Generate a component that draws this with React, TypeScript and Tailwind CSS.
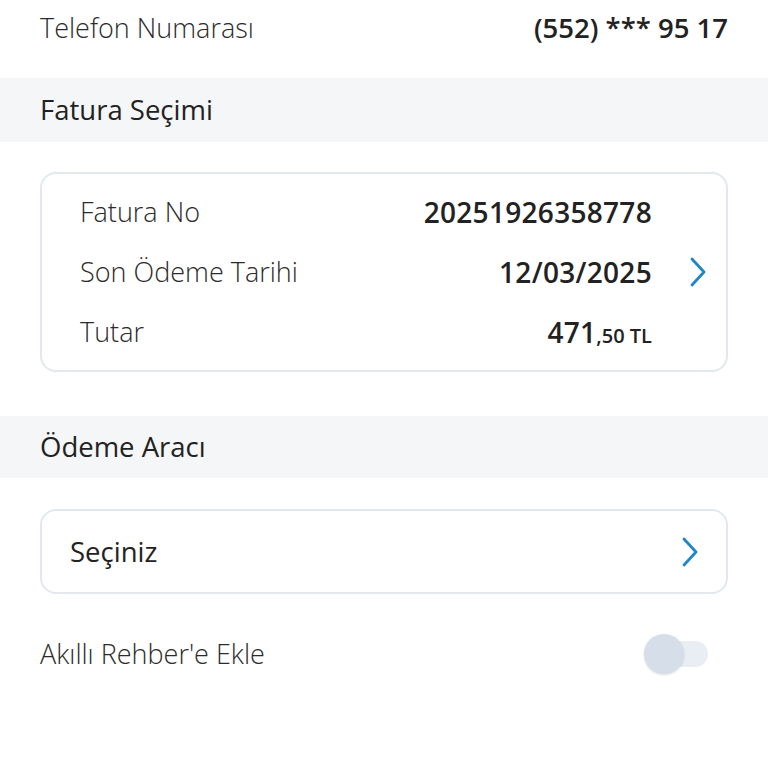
const font = { fontFamily: '"Open Sans", "Noto Sans", sans-serif' };

const Chevron = ({ className }: { className?: string }) => (
  <svg viewBox="0 0 20 34" className={className} fill="none">
    <path d="M4 4 L16 17 L4 30" stroke="#1f86c8" strokeWidth="2.8" strokeLinecap="round" strokeLinejoin="round" />
  </svg>
);

const InfoRow = ({ label, children }: { label: string; children: React.ReactNode }) => (
  <div className="flex h-[60px] items-center justify-between">
    <span className="text-[27px] font-light text-[#2b2b2b]">{label}</span>
    <span className="text-[28px] font-semibold tracking-[0.3px] text-[#222]">{children}</span>
  </div>
);

export default function App() {
  return (
    <div className="flex h-[768px] w-[768px] flex-col bg-white" style={font}>
      <div className="flex h-[56px] items-center justify-between px-10">
        <span className="text-[27px] font-light text-[#2b2b2b]">Telefon Numarası</span>
        <span className="text-[27.5px] font-semibold text-[#222]">(552) *** 95 17</span>
      </div>

      <div className="mt-[22px] flex h-[64px] items-center bg-[#f5f6f8] px-10">
        <span className="text-[27.5px] text-[#222]">Fatura Seçimi</span>
      </div>

      <div className="mx-10 mt-[30px] flex h-[200px] items-center rounded-[16px] border-2 border-[#e3e8ee] pl-[38px] pr-[18px]">
        <div className="flex flex-1 flex-col">
          <InfoRow label="Fatura No">20251926358778</InfoRow>
          <InfoRow label="Son Ödeme Tarihi">12/03/2025</InfoRow>
          <InfoRow label="Tutar">
            471<span className="text-[20px] tracking-normal">,50 TL</span>
          </InfoRow>
        </div>
        <Chevron className="ml-[36px] h-[34px] w-[20px]" />
      </div>

      <div className="mt-[44px] flex h-[62px] items-center bg-[#f5f6f8] px-10">
        <span className="text-[27.5px] text-[#222]">Ödeme Aracı</span>
      </div>

      <div className="mx-10 mt-[31px] flex h-[85px] items-center justify-between rounded-[16px] border-2 border-[#e3e8ee] pl-[28px] pr-[26px]">
        <span className="text-[27.5px] font-medium text-[#222]">Seçiniz</span>
        <Chevron className="h-[34px] w-[20px]" />
      </div>

      <div className="mt-[30px] flex h-[60px] items-center justify-between pl-10 pr-[60px]">
        <span className="text-[27px] font-light text-[#2b2b2b]">Akıllı Rehber'e Ekle</span>
        <div className="relative h-[26px] w-[48px] rounded-full bg-[#e9eef4]">
          <div className="absolute left-[-16px] top-[-7px] h-[40px] w-[40px] rounded-full bg-[#d6dee9] shadow-sm" />
        </div>
      </div>
    </div>
  );
}
